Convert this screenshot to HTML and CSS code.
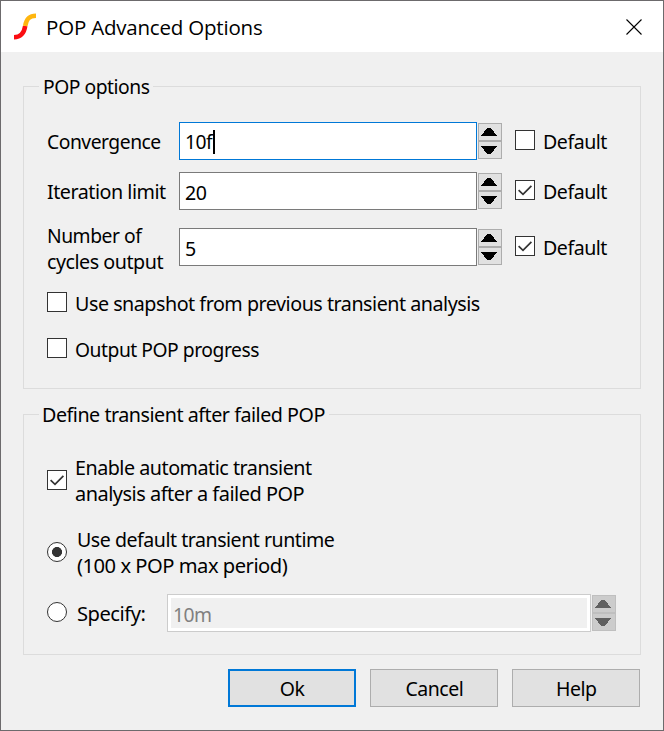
FILE: index.html
```html
<!DOCTYPE html>
<html lang="en">
<head>
<meta charset="utf-8">
<title>POP Advanced Options</title>
<link rel="stylesheet" href="styles.css">
</head>
<body>
<svg class="defs" width="0" height="0" aria-hidden="true">
  <symbol id="tick" viewBox="0 0 20 20"><path d="M3.6 10.2 8 14.4 16.4 5.8" fill="none" stroke="#333" stroke-width="1.7"/></symbol>
  <symbol id="spin" viewBox="0 0 24 36">
    <path d="M9 5h4v1h1v1h1v1h1v2h1v1h1v1h1v1H3v-1h1v-1h1v-1h1V8h1V7h1V6h1z"/>
    <path d="M3 23h16v1h-1v1h-1v1h-1v2h-1v1h-1v1h-1v1H9v-1H8v-1H7v-1H6v-2H5v-1H4v-1H3z"/>
  </symbol>
</svg>
<main class="window">
  <header class="titlebar">
    <svg class="logo" width="24" height="28" viewBox="0 0 24 28"><path d="M0 24.200C7 24.200 10.200 19.500 11.200 13" fill="none" stroke="#fb0d12" stroke-width="4.600"/><path d="M11.200 13C12.200 6.500 14.500 2.700 22 2.700" fill="none" stroke="#ffb60f" stroke-width="4.600"/></svg>
    <h1 class="title">POP Advanced Options</h1>
    <svg class="close" width="16" height="16" viewBox="0 0 16 16"><path d="M.5.5l15 15M15.500.5l-15 15" stroke="#000" stroke-width="1.1"/></svg>
  </header>
  <fieldset class="group pop">
    <legend><span class="text w94">POP options</span></legend>
    <div class="row">
      <span class="label text w94">Convergence</span>
      <div class="field focus"><span class="text w94 typed">10f</span><i class="caret"></i></div>
      <div class="spinner"><svg><use href="#spin"/></svg></div>
      <span class="box"></span><span class="default text w95">Default</span>
    </div>
    <div class="row">
      <span class="label text w96">Iteration limit</span>
      <div class="field"><span class="text w95">20</span></div>
      <div class="spinner"><svg><use href="#spin"/></svg></div>
      <span class="box"><svg><use href="#tick"/></svg></span><span class="default text w95">Default</span>
    </div>
    <div class="row tall">
      <span class="label"><span class="text w94">Number of</span><br><span class="text w96">cycles output</span></span>
      <div class="field"><span class="text w95">5</span></div>
      <div class="spinner"><svg><use href="#spin"/></svg></div>
      <span class="box"><svg><use href="#tick"/></svg></span><span class="default text w95">Default</span>
    </div>
    <div class="option snapshot"><span class="box"></span><span class="text w96">Use snapshot from previous transient analysis</span></div>
    <div class="option progress"><span class="box"></span><span class="text w94">Output POP progress</span></div>
  </fieldset>
  <fieldset class="group failed">
    <legend><span class="text w96">Define transient after failed POP</span></legend>
    <div class="option auto"><span class="box"><svg><use href="#tick"/></svg></span><span><span class="text w96">Enable automatic transient</span><br><span class="text w97">analysis after a failed POP</span></span></div>
    <div class="option runtime"><span class="radio on"></span><span><span class="text w95">Use default transient runtime</span><br><span class="text w98">(100 x POP max period)</span></span></div>
    <div class="option specify">
      <span class="radio"></span><span class="specify-label"><span class="text w98">Specify:</span></span>
      <div class="field disabled"><span class="text w94">10m</span></div>
      <div class="spinner off"><svg><use href="#spin"/></svg></div>
    </div>
  </fieldset>
  <footer class="buttons">
    <button class="primary"><span>Ok</span></button><button><span>Cancel</span></button><button><span>Help</span></button>
  </footer>
</main>
</body>
</html>
```
FILE: styles.css
```css
* { box-sizing: border-box; }
body { margin: 0; font: 20.5px/26px "Noto Sans", sans-serif; color: #000; letter-spacing: -0.5px; }
.defs { position: absolute; }
.text { display: inline-block; transform-origin: 0 50%; }
.w94 { transform: scaleX(.94); }
.w95 { transform: scaleX(.955); }
.w96 { transform: scaleX(.961); }
.w97 { transform: scaleX(.972); }
.w98 { transform: scaleX(.983); }
.window { width: 664px; height: 731px; border: 1px solid #6c6a6c; background: #f0f0f0; display: flex; flex-direction: column; white-space: nowrap; }
.titlebar { height: 51px; background: #fff; display: flex; align-items: center; padding: 0 21px 0 13px; flex: none; }
.logo { flex: none; margin-top: 1px; }
.title { margin: 0 0 0 8px; font: 20.5px/26px "Open Sans", sans-serif; letter-spacing: -0.2px; flex: 1; }
.close { flex: none; }
.group { margin: 0 22px; min-width: 0; border: 1px solid #dcdcdc; padding: 0 0 0 23px; width: 618px; }
.pop { margin-top: 21px; height: 316px; }
.failed { margin-top: 12px; height: 254px; }
legend { height: 26px; margin-left: -8px; padding: 0 4px; width: 114px; }
.failed legend { width: 290px; padding-left: 3px; }
.row { display: grid; grid-template-columns: 132px 298px 24px 20px auto; align-items: center; justify-content: start; height: 38px; margin-bottom: 12px; }
.pop legend + .row { margin-top: 23px; }
.row .spinner { margin-left: 1px; }
.row .box { margin-left: 14px; }
.row .default { margin-left: 22px; }
.row.tall { height: 50px; margin-bottom: 0; }
.row.tall > :not(.label) { position: relative; top: -1px; }
.field { height: 38px; border: 1px solid #7a7a7a; background: #fff; padding: 6px 0 0 5px; display: flex; }
.field.focus { border-color: #0078d7; padding-top: 5px; }
.typed { width: 28px; }
.caret { width: 2px; height: 24px; background: #000; margin: 2px 0 0 0; }
.field.disabled { border-color: #ccc; box-shadow: inset 0 0 0 3px #fff; background: #f0f0f0; color: #808080; width: 424px; margin-left: 21px; }
.spinner { width: 24px; height: 36px; border: 1px solid #adadad; background: linear-gradient(#adadad, #adadad) 0 16px / 100% 2px no-repeat #e1e1e1; flex: none; }
.spinner svg { display: block; width: 24px; height: 36px; margin: -1px; shape-rendering: crispEdges; }
.spinner.off { border-color: #bfbfbf; background: linear-gradient(#bfbfbf, #bfbfbf) 0 16px / 100% 2px no-repeat #ccc; fill: #606060; margin-left: 1px; }
.box { width: 20px; height: 20px; border: 1px solid #333; background: #fff; flex: none; margin-top: -2px; }
.row .box { margin-top: -3px; }
.box svg { display: block; width: 20px; height: 20px; margin: -1px; }
.option { display: flex; align-items: center; }
.option .box { margin-right: 8px; }
.snapshot { height: 26px; margin-top: 18px; }
.progress { height: 26px; margin-top: 20px; }
.auto { height: 52px; margin-top: 27px; }
.auto .box { margin-top: -1px; }
.runtime { height: 52px; margin-top: 20px; }
.specify { height: 38px; margin-top: 16px; }
.radio { width: 20px; height: 20px; border: 1px solid #333; border-radius: 50%; background: #fff; margin-right: 10px; flex: none; }
.radio.on { background: radial-gradient(circle, #333 4.700px, #fff 5.300px); }
.specify .radio { margin-top: -2px; }
.specify-label { width: 69px; }
.buttons { display: flex; justify-content: flex-end; gap: 14px; padding: 14px 23px 0 0; }
button { width: 128px; height: 38px; border: 1px solid #adadad; background: #e1e1e1; font: inherit; letter-spacing: inherit; padding: 0 0 1px; color: #000; }
button span { display: inline-block; transform: scaleX(.95); }
.primary { border: 2px solid #0078d7; }
```
